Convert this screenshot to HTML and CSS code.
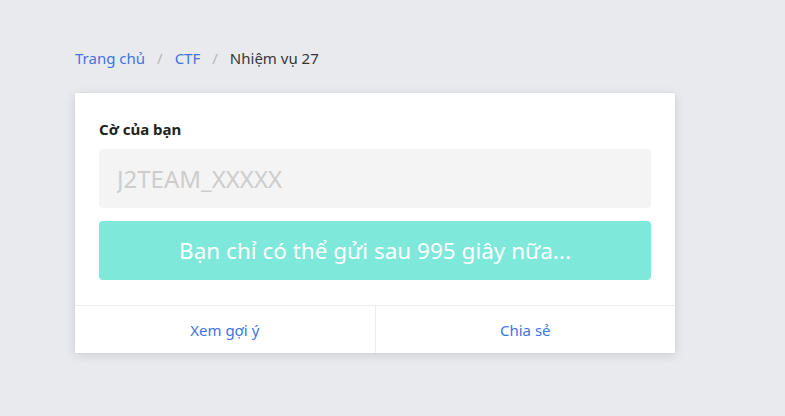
FILE: index.html
```html
<!DOCTYPE html>
<html lang="vi">
<head>
<meta charset="utf-8">
<link rel="stylesheet" href="styles.css">
</head>
<body>
<main class="page">
  <nav class="breadcrumb">
    <a href="#">Trang chủ</a>
    <span class="sep">/</span>
    <a href="#">CTF</a>
    <span class="sep">/</span>
    <span class="current">Nhiệm vụ 27</span>
  </nav>
  <section class="card">
    <div class="card-body">
      <label class="label">Cờ của bạn</label>
      <input class="input" type="text" placeholder="J2TEAM_XXXXX">
      <button class="btn" disabled>Bạn chỉ có thể gửi sau 995 giây nữa...</button>
    </div>
    <footer class="card-footer">
      <a href="#" class="footer-item">Xem gợi ý</a>
      <a href="#" class="footer-item">Chia sẻ</a>
    </footer>
  </section>
</main>
</body>
</html>
```
FILE: styles.css
```css
* { box-sizing: border-box; }
html, body { margin: 0; padding: 0; }
body {
  background: #e9eaee;
  font-family: "Noto Sans", "Open Sans", sans-serif;
  font-size: 15px;
  color: #363636;
  height: 416px;
  overflow: hidden;
}
.page {
  padding: 45px 0 0 75px;
  width: 675px;
}
.breadcrumb {
  display: flex;
  align-items: center;
  height: 26px;
  font-size: 15px;
}
.breadcrumb a { color: #3f74dc; text-decoration: none; }
.breadcrumb .sep { color: #b5b5b5; margin: 0 12px; }
.breadcrumb .current { color: #363636; }
.card {
  margin-top: 22px;
  background: #fff;
  box-shadow: 0 2px 10px rgba(10, 10, 10, 0.12), 0 0 0 1px rgba(10,10,10,0.02);
  width: 600px;
}
.card-body {
  padding: 26px 24px 25px;
  display: flex;
  flex-direction: column;
}
.label {
  font-weight: 700;
  font-size: 15px;
  line-height: 20px;
  color: #222;
  margin-bottom: 10px;
}
.input {
  height: 59px;
  border: none;
  border-radius: 4px;
  background: #f4f4f4;
  padding: 0 18px;
  font-family: inherit;
  font-size: 24px;
  color: #363636;
  outline: none;
}
.input::placeholder { color: #cdcdcd; }
.btn {
  margin-top: 13px;
  height: 59px;
  border: none;
  border-radius: 4px;
  background: #7ee8da;
  color: #fff;
  font-family: inherit;
  font-size: 22.5px;
  cursor: not-allowed;
}
.card-footer {
  display: flex;
  border-top: 1px solid #ededed;
  height: 48px;
}
.footer-item {
  flex: 1;
  display: flex;
  align-items: center;
  justify-content: center;
  color: #3f74dc;
  text-decoration: none;
  font-size: 15px;
}
.footer-item + .footer-item { border-left: 1px solid #ededed; }
```
